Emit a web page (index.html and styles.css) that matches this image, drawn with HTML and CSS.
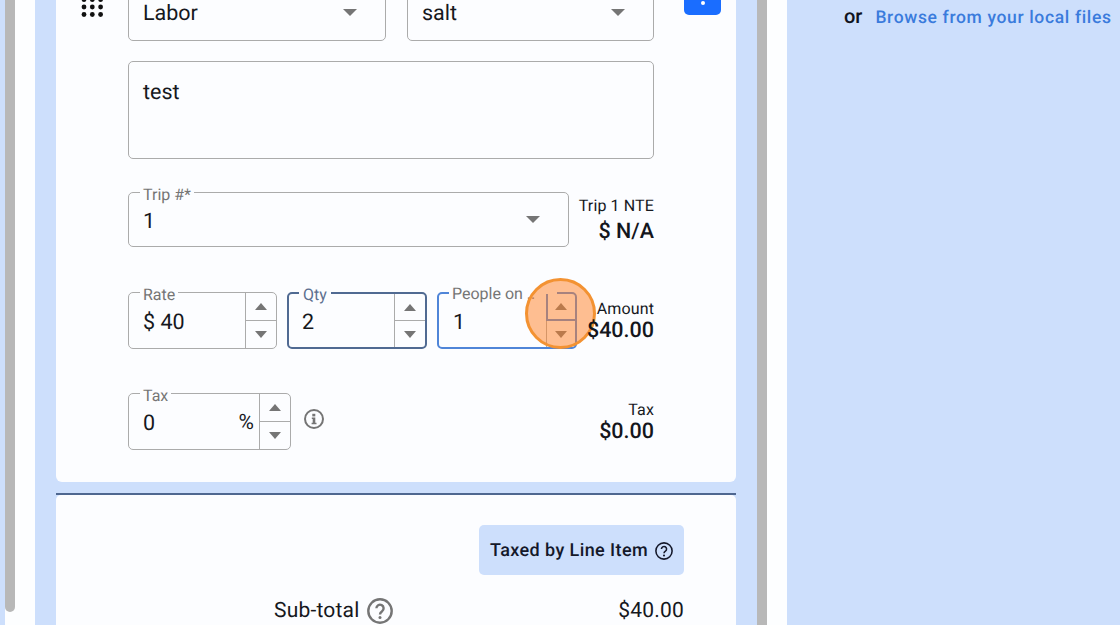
FILE: index.html
```html
<!DOCTYPE html>
<html lang="en">
<head>
<meta charset="utf-8">
<title>Line item</title>
<link rel="stylesheet" href="styles.css">
</head>
<body>
<div class="page">
  <div class="track"><div class="thumb"></div></div>
  <main class="panel">
    <section class="card card-form">
      <div class="row-top">
        <svg class="drag" width="24" height="32" viewBox="0 0 24 32" aria-hidden="true">
          <g fill="#111">
            <circle cx="4" cy="4" r="2.4"/><circle cx="12.300" cy="4" r="2.4"/><circle cx="20.600" cy="4" r="2.4"/>
            <circle cx="4" cy="11.500" r="2.4"/><circle cx="12.300" cy="11.500" r="2.4"/><circle cx="20.600" cy="11.500" r="2.4"/>
            <circle cx="4" cy="19" r="2.4"/><circle cx="12.300" cy="19" r="2.4"/><circle cx="20.600" cy="19" r="2.4"/>
            <circle cx="4" cy="26.500" r="2.4"/><circle cx="12.300" cy="26.500" r="2.4"/><circle cx="20.600" cy="26.500" r="2.4"/>
          </g>
        </svg>
        <div class="selects">
          <div class="field select-top"><span class="value">Labor</span><i class="caret"></i></div>
          <div class="field select-top"><span class="value">salt</span><i class="caret"></i></div>
        </div>
        <div class="more"><span class="more-dot"></span></div>
      </div>
      <div class="form-col">
        <div class="field notes"><span class="value">test</span></div>
        <div class="row-trip">
          <div class="field trip">
            <span class="legend">Trip #*</span>
            <span class="value">1</span><i class="caret"></i>
          </div>
          <div class="stat stat-trip"><span class="stat-label">Trip 1 NTE</span><strong class="stat-value">$ N/A</strong></div>
        </div>
        <div class="row-nums">
          <div class="field num rate">
            <span class="legend">Rate</span>
            <span class="value num-value">$ 40</span>
            <div class="spin"><span class="spin-btn"><i class="up"></i></span><span class="spin-btn"><i class="down"></i></span></div>
          </div>
          <div class="field num qty">
            <span class="legend">Qty</span>
            <span class="value num-value">2</span>
            <div class="spin"><span class="spin-btn"><i class="up"></i></span><span class="spin-btn"><i class="down"></i></span></div>
          </div>
          <div class="field num people">
            <span class="legend">People on ..</span>
            <span class="value num-value">1</span>
            <div class="spin"><span class="spin-btn spin-active"><i class="up"></i></span><span class="spin-btn spin-below"><i class="down"></i></span></div>
            <span class="pointer"></span>
          </div>
          <div class="stat stat-amount"><span class="stat-label">Amount</span><strong class="stat-value">$40.00</strong></div>
        </div>
        <div class="row-tax">
          <div class="field num tax">
            <span class="legend">Tax</span>
            <span class="value num-value">0</span>
            <span class="pct">%</span>
            <div class="spin"><span class="spin-btn"><i class="up"></i></span><span class="spin-btn"><i class="down"></i></span></div>
          </div>
          <svg class="info" width="22" height="22" viewBox="0 0 22 22" aria-hidden="true">
            <circle cx="11" cy="11" r="9" fill="none" stroke="#757575" stroke-width="2"/>
            <rect x="9.300" y="5.800" width="3" height="2.600" fill="#757575"/>
            <path d="M8.800 9.600h3.500v5.200h1.200v1.500H8.600v-1.500h1.100v-3.700H8.800z" fill="#757575"/>
          </svg>
          <div class="stat stat-tax"><span class="stat-label">Tax</span><strong class="stat-value">$0.00</strong></div>
        </div>
      </div>
    </section>
    <div class="rule"></div>
    <section class="card card-totals">
      <div class="tax-mode">
        <div class="tax-chip">Taxed by Line Item
          <svg class="chip-help" width="20" height="20" viewBox="0 0 18 18" aria-hidden="true">
            <circle cx="9" cy="9" r="7.300" fill="none" stroke="#14182a" stroke-width="1.400"/>
            <path d="M6.700 7.200a2.300 2.300 0 1 1 3.600 1.900c-.9.600-1.300 1-1.300 2" fill="none" stroke="#14182a" stroke-width="1.400"/>
            <circle cx="9" cy="13" r=".95" fill="#14182a"/>
          </svg>
        </div>
      </div>
      <div class="subtotal">
        <div class="sub-label">Sub-total
          <svg class="sub-help" width="28" height="28" viewBox="0 0 28 28" aria-hidden="true">
            <circle cx="14" cy="14" r="11.700" fill="none" stroke="#757575" stroke-width="2.400"/>
            <path d="M10.400 11.200a3.600 3.600 0 1 1 5.700 3c-1.400 1-2.100 1.500-2.100 3.200" fill="none" stroke="#757575" stroke-width="2.400"/>
            <circle cx="14" cy="20.500" r="1.500" fill="#757575"/>
          </svg>
        </div>
        <span class="sub-value">$40.00</span>
      </div>
    </section>
  </main>
  <div class="track track-right"></div>
  <aside class="upload">
    <span class="or">or</span>
    <a class="browse" href="#">Browse from your local files</a>
  </aside>
</div>
</body>
</html>
```
FILE: styles.css
```css
* { box-sizing: border-box; }
html, body { margin: 0; height: 100%; overflow: hidden; }
body { background: #cddffc; font-family: Roboto, "Liberation Sans", sans-serif; color: #14161c; text-rendering: geometricPrecision; }

.page { display: flex; width: 1120px; height: 625px; overflow: hidden; background: #cddffc; }

.track { flex: none; width: 30px; margin-left: 5px; background: #fdfeff; }
.thumb { width: 10px; height: 612px; background: #b8b8b8; border-radius: 0 0 5px 5px; }

.panel { flex: none; width: 722px; padding: 0 21px; height: 625px; background: #cddffc; }
.track-right { width: 30px; margin: 0; background: linear-gradient(90deg, #b8b8b8 10px, #fdfeff 10px); }

.card { background: #fcfdff; width: 680px; }
.card-form { height: 482px; border-radius: 0 0 6px 6px; padding-left: 27px; }
.rule { width: 680px; height: 2px; margin-top: 10.500px; background: #4f6790; }
.card-totals { height: 200px; border-radius: 5px 5px 0 0; padding: 30.500px 52px 0 0; }

.row-top { display: flex; align-items: flex-start; height: 41px; }
.drag { flex: none; margin: -12px 24px 0 -3px; }
.selects { display: flex; gap: 21px; margin-top: -20px; }
.more { flex: none; width: 37px; height: 35px; margin: -20px 0 0 30px; background: #1a6dff; border-radius: 0 0 5px 5px; position: relative; }
.more-dot { position: absolute; left: 16.500px; top: 21px; width: 4px; height: 4px; border-radius: 50%; background: #fff; }

.field { position: relative; display: block; border: 1px solid #ababab; border-radius: 5px; background: #fcfdff; }
.value { display: block; font-size: 21.500px; line-height: 26px; color: #16181d; }
.select-top { height: 61px; padding: 19.500px 14px 0; }
.select-top:first-child { width: 258px; }
.select-top:last-child { width: 247px; }
.caret { position: absolute; border-left: 7.250px solid transparent; border-right: 7.250px solid transparent; border-top: 7px solid #757575; }
.select-top .caret { top: 28px; right: 28px; }

.form-col { width: 526px; margin-left: 45px; }
.notes { width: 526px; height: 98px; margin-top: 20px; padding: 18px 14px 0; }

.legend { position: absolute; left: 11px; top: -8px; padding: 0 3px; background: linear-gradient(#fcfdff 11px, transparent 11px); font-size: 16px; line-height: 20px; color: #757575; white-space: nowrap; }

.row-trip { display: flex; justify-content: space-between; align-items: flex-start; margin-top: 33px; }
.trip { width: 441px; height: 55px; padding: 16px 14px 0; }
.trip .caret { top: 23px; right: 28.500px; }

.stat { display: flex; flex-direction: column; align-items: flex-end; }
.stat-label { font-size: 16px; line-height: 20px; color: #16181d; letter-spacing: .12px; }
.stat-value { font-size: 21.500px; line-height: 24px; font-weight: 500; color: #14161c; letter-spacing: 0; }
.stat-trip { padding-top: 4px; }
.stat-trip .stat-value { margin-top: 4px; }

.row-nums { display: flex; margin-top: 45px; position: relative; }
.num { height: 57px; padding: 17px 14px 0; }
.num-value { white-space: nowrap; }
.rate { width: 149px; }
.qty { width: 140px; margin-left: 10px; border: 2.500px solid #506a92; padding: 15.500px 13px 0; }
.people { width: 140px; margin-left: 10px; border: 2px solid #4f85d8; padding: 16px 14px 0; }
.qty .legend { left: 10px; padding: 0 4px; color: #5c7090; top: -9px; }
.people .legend { left: 10px; top: -10px; padding-right: 22px; }

.spin { position: absolute; top: 0; right: 0; bottom: 0; width: 31px; display: flex; flex-direction: column; border-left: 1px solid #ababab; }
.people .spin { width: 29px; border-left: 0; }
.spin-btn { flex: 1; display: flex; align-items: center; justify-content: center; padding-right: 1px; }
.spin-btn + .spin-btn { border-top: 1px solid #ababab; }
.spin-active { border-left: 2px solid #4f85d8; border-bottom: 2px solid #4f85d8; }
.spin-btn.spin-below { border-top: 0; border-left: 1px solid #ababab; padding-top: 2px; }
.up { border-left: 6px solid transparent; border-right: 6px solid transparent; border-bottom: 7px solid #757575; }
.down { border-left: 6px solid transparent; border-right: 6px solid transparent; border-top: 7px solid #757575; }

.pointer { position: absolute; left: 86px; top: -16px; width: 71px; height: 71px; border-radius: 50%; background: rgba(255, 128, 36, .5); border: 3px solid #f39232; z-index: 2; }

.stat-amount { flex: 1; padding-top: 7px; }
.stat-amount .stat-value { margin-top: 0; position: relative; z-index: 3; }

.row-tax { display: flex; align-items: flex-start; margin-top: 44px; }
.tax { width: 163px; }
.pct { position: absolute; right: 36px; top: 17px; font-size: 21px; line-height: 24px; color: #16181d; }
.info { flex: none; margin: 15px 0 0 12px; }
.stat-tax { margin-left: auto; padding-top: 7px; }
.stat-tax .stat-value { margin-top: 0; }

.tax-mode { display: flex; justify-content: flex-end; }
.tax-chip { display: flex; align-items: center; gap: 6px; width: 205px; height: 50px; padding-left: 11px; background: #cddffc; border-radius: 5px; font-size: 18px; font-weight: 500; letter-spacing: .4px; color: #14182a; white-space: nowrap; }
.chip-help { flex: none; margin-top: 2px; }

.subtotal { display: flex; justify-content: space-between; align-items: center; margin-top: 22px; padding-left: 218px; }
.sub-label { display: flex; align-items: center; gap: 7px; font-size: 21px; color: #16181d; letter-spacing: .2px; }
.sub-value { font-size: 21px; letter-spacing: .2px; color: #16181d; }

.upload { flex: 1; display: flex; align-items: baseline; padding: 4px 0 0 57px; gap: 13px; }
.or { font-size: 20px; font-weight: 500; color: #0f1320; }
.browse { font-size: 17.500px; font-weight: 500; color: #3a7bdc; text-decoration: none; letter-spacing: .64px; white-space: nowrap; }
```
